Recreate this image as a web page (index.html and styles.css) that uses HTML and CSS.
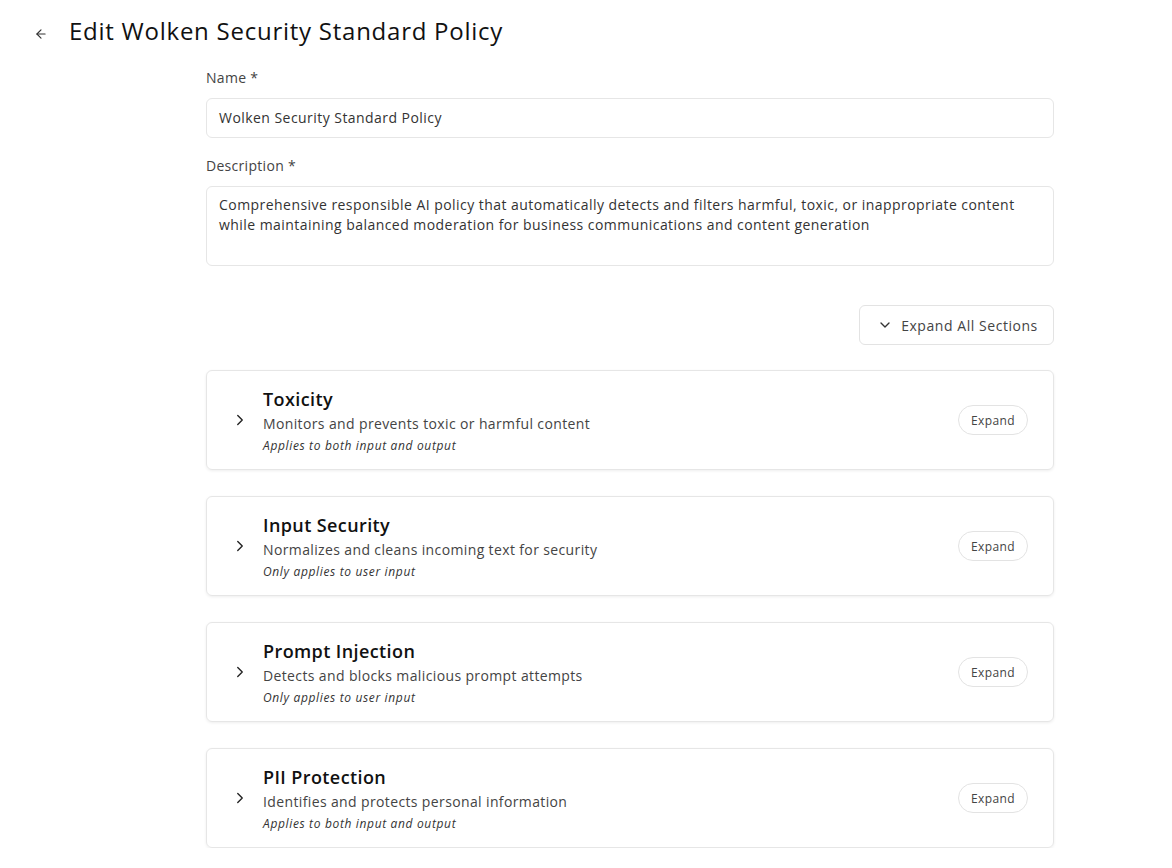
FILE: index.html
```html
<!DOCTYPE html>
<html lang="en">
<head>
<meta charset="utf-8">
<title>Edit Wolken Security Standard Policy</title>
<link rel="stylesheet" href="styles.css">
</head>
<body>
<header class="topbar">
  <button class="back" aria-label="Back">
    <svg width="14" height="14" viewBox="0 0 24 24" fill="none" stroke="#333" stroke-width="2" stroke-linecap="round" stroke-linejoin="round"><path d="M19 12H5"/><path d="M12 19l-7-7 7-7"/></svg>
  </button>
  <h1 class="title">Edit Wolken Security Standard Policy</h1>
</header>
<main class="form">
  <label class="label">Name *</label>
  <div class="input">Wolken Security Standard Policy</div>
  <label class="label label-gap">Description *</label>
  <div class="textarea">Comprehensive responsible AI policy that automatically detects and filters harmful, toxic, or inappropriate content while maintaining balanced moderation for business communications and content generation</div>

  <div class="actions">
    <button class="expand-all">
      <svg width="16" height="16" viewBox="0 0 24 24" fill="none" stroke="#333" stroke-width="2" stroke-linecap="round" stroke-linejoin="round"><path d="M6 9l6 6 6-6"/></svg>
      <span>Expand All Sections</span>
    </button>
  </div>

  <section class="cards">
    <div class="card">
      <svg class="chev" width="18" height="18" viewBox="0 0 24 24" fill="none" stroke="#222" stroke-width="1.8" stroke-linecap="round" stroke-linejoin="round"><path d="M9 6l6 6-6 6"/></svg>
      <div class="card-body">
        <h2 class="card-title">Toxicity</h2>
        <p class="card-desc">Monitors and prevents toxic or harmful content</p>
        <p class="card-note">Applies to both input and output</p>
      </div>
      <button class="pill">Expand</button>
    </div>
    <div class="card">
      <svg class="chev" width="18" height="18" viewBox="0 0 24 24" fill="none" stroke="#222" stroke-width="1.8" stroke-linecap="round" stroke-linejoin="round"><path d="M9 6l6 6-6 6"/></svg>
      <div class="card-body">
        <h2 class="card-title">Input Security</h2>
        <p class="card-desc">Normalizes and cleans incoming text for security</p>
        <p class="card-note">Only applies to user input</p>
      </div>
      <button class="pill">Expand</button>
    </div>
    <div class="card">
      <svg class="chev" width="18" height="18" viewBox="0 0 24 24" fill="none" stroke="#222" stroke-width="1.8" stroke-linecap="round" stroke-linejoin="round"><path d="M9 6l6 6-6 6"/></svg>
      <div class="card-body">
        <h2 class="card-title">Prompt Injection</h2>
        <p class="card-desc">Detects and blocks malicious prompt attempts</p>
        <p class="card-note">Only applies to user input</p>
      </div>
      <button class="pill">Expand</button>
    </div>
    <div class="card">
      <svg class="chev" width="18" height="18" viewBox="0 0 24 24" fill="none" stroke="#222" stroke-width="1.8" stroke-linecap="round" stroke-linejoin="round"><path d="M9 6l6 6-6 6"/></svg>
      <div class="card-body">
        <h2 class="card-title">PII Protection</h2>
        <p class="card-desc">Identifies and protects personal information</p>
        <p class="card-note">Applies to both input and output</p>
      </div>
      <button class="pill">Expand</button>
    </div>
  </section>
</main>
</body>
</html>
```
FILE: styles.css
```css
* { box-sizing: border-box; }
html, body { margin: 0; padding: 0; background: #fff; }
body {
  font-family: "Open Sans", "Noto Sans", sans-serif;
  color: #222;
  overflow: hidden;
}
button { font-family: inherit; cursor: pointer; }

.topbar {
  display: flex;
  align-items: center;
  padding: 13px 0 0 34px;
  height: 48px;
}
.back {
  border: 0;
  background: none;
  padding: 0;
  width: 14px;
  height: 14px;
  display: flex;
  margin-right: 21px;
  margin-top: 6px;
}
.title {
  margin: 0;
  font-size: 24px;
  font-weight: 400;
  line-height: 34px;
  color: #111;
  letter-spacing: 0.75px;
}

.form {
  width: 848px;
  margin: 20px 0 0 206px;
  display: flex;
  flex-direction: column;
}
.label {
  font-size: 14px;
  line-height: 20px;
  color: #444;
  margin-bottom: 10px;
  letter-spacing: 0.3px;
}
.label-gap { margin-top: 18px; }
.input {
  height: 40px;
  border: 1px solid #e6e6e6;
  border-radius: 6px;
  padding: 0 12px 1px;
  display: flex;
  align-items: center;
  font-size: 14px;
  color: #333;
  letter-spacing: 0.45px;
}
.textarea {
  height: 80px;
  border: 1px solid #e6e6e6;
  border-radius: 6px;
  padding: 8px 12px;
  font-size: 14px;
  line-height: 20px;
  color: #333;
  letter-spacing: 0.45px;
}

.actions {
  display: flex;
  justify-content: flex-end;
  margin-top: 39px;
}
.expand-all {
  height: 40px;
  width: 195px;
  display: flex;
  align-items: center;
  justify-content: center;
  gap: 8px;
  border: 1px solid #e3e3e3;
  border-radius: 6px;
  background: #fff;
  font-size: 14px;
  font-weight: 500;
  color: #444;
  letter-spacing: 0.55px;
  padding: 0 0 0 2px;
}

.cards {
  margin-top: 25px;
  display: flex;
  flex-direction: column;
  gap: 26px;
}
.card {
  height: 100px;
  border: 1px solid #e6e6e6;
  border-radius: 6px;
  box-shadow: 0 1px 3px rgba(0,0,0,0.07);
  display: flex;
  align-items: center;
  padding: 0 25px 0 24px;
}
.chev { flex: none; margin-right: 14px; }
.card-body { flex: 1; margin-top: 2px; }
.card-title {
  margin: 0;
  font-size: 18px;
  font-weight: 600;
  line-height: 26px;
  color: #111;
  letter-spacing: 0.4px;
}
.card-desc {
  margin: 0;
  font-size: 14px;
  line-height: 24px;
  color: #444;
  letter-spacing: 0.37px;
}
.card-note {
  margin: 0;
  font-size: 12px;
  line-height: 20px;
  font-style: italic;
  color: #333;
  letter-spacing: 0.65px;
}
.pill {
  height: 30px;
  width: 70px;
  border: 1px solid #e3e3e3;
  border-radius: 15px;
  background: #fff;
  font-size: 12px;
  color: #444;
  padding: 0;
  letter-spacing: 0.4px;
}
```
